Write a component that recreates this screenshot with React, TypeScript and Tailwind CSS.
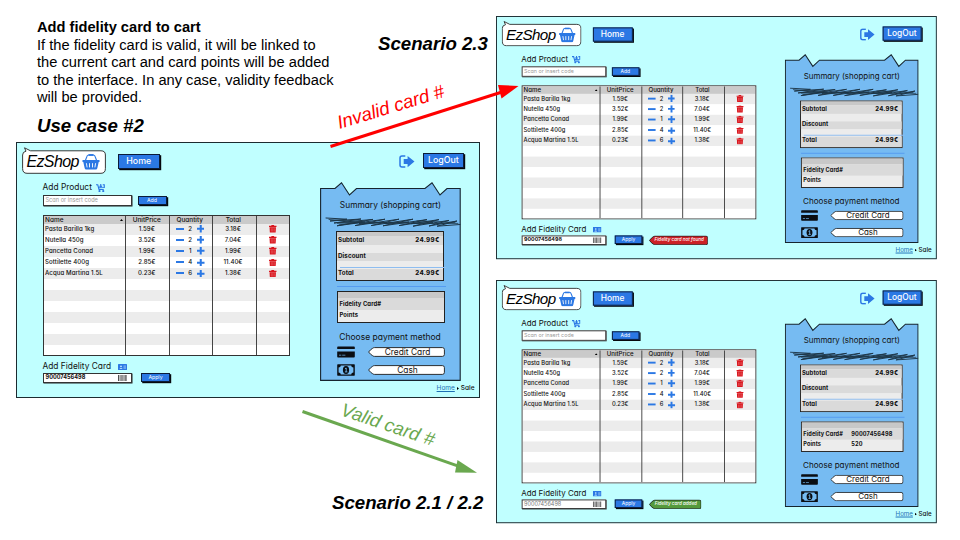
import React from "react";

type Status = "none" | "error" | "ok";

const items = [
  { name: "Pasta Barilla 1kg", price: "1.59€", qty: 2, total: "3.18€" },
  { name: "Nutella 450g", price: "3.52€", qty: 2, total: "7.04€" },
  { name: "Pancetta Conad", price: "1.99€", qty: 1, total: "1.99€" },
  { name: "Sottilette 400g", price: "2.85€", qty: 4, total: "11.40€" },
  { name: "Acqua Martina 1.5L", price: "0.23€", qty: 6, total: "1.38€" },
];

function Basket() {
  return (
    <svg className="h-[16px] w-[18px] shrink-0 text-[#2b78e4]" viewBox="0 0 18 16" fill="none" stroke="currentColor">
      <path d="M3.2 7 L5 2.2 Q5.4 1 6.8 1 H11.2 Q12.6 1 13 2.2 L14.8 7" strokeWidth="1.1" />
      <path d="M6.5 1 H11.5" strokeWidth="1.8" />
      <path d="M.5 6 H17.5 V8 H16.7 L15.3 14.2 Q15 15.5 13.8 15.5 H4.2 Q3 15.5 2.7 14.2 L1.3 8 H.5 Z" fill="currentColor" stroke="none" />
      <path d="M4.4 9.2 L5.1 13.4 M7.5 9.2 V13.4 M10.5 9.2 V13.4 M13.6 9.2 L12.9 13.4" stroke="#fff" strokeWidth=".9" />
    </svg>
  );
}

function Cart() {
  return (
    <svg className="h-[8px] w-[9px]" viewBox="0 0 18 16" fill="none" stroke="#2b78e4" strokeWidth="2.3">
      <path d="M0 1.5 H3.5 L6 11 H15.5" />
      <path d="M5 7.5 L16.5 7 V1.5 H13.5" />
      <path d="M9.5 0 V5.5 M7 3.6 L9.5 6 L12 3.6" />
      <circle cx="7" cy="14" r="1" fill="#2b78e4" />
      <circle cx="14.5" cy="14" r="1" fill="#2b78e4" />
    </svg>
  );
}

function Exit() {
  return (
    <svg className="h-[13px] w-[16px]" viewBox="0 0 16 13">
      <path d="M6.3 1 H3 Q1 1 1 3 V10 Q1 12 3 12 H6.3" fill="none" stroke="#2b78e4" strokeWidth="1.5" />
      <path d="M4.7 4.1 H8.6 V1 L15.5 6.6 L8.6 12.2 V9.1 H4.7 Z" fill="#2b78e4" />
    </svg>
  );
}

function Trash() {
  return (
    <svg className="h-[7.5px] w-[7.5px]" viewBox="0 0 14 14">
      <path d="M0 1.6 H4 L4.8 .2 H9.2 L10 1.6 H14 V3.8 H0 Z M1 4.2 H13 L12.4 14 H1.6 Z" fill="#d9151d" />
      <path d="M4.3 6 V12.3 M7 6 V12.3 M9.7 6 V12.3" stroke="#f08f93" strokeWidth=".8" />
    </svg>
  );
}

function IdCard() {
  return (
    <svg className="h-[6px] w-[9px]" viewBox="0 0 18 12">
      <rect width="18" height="12" rx="1" fill="#2b78e4" />
      <circle cx="6" cy="4.5" r="1.7" fill="#d5f5ff" />
      <path d="M2.8 9.6 Q6 5.2 9.2 9.6 Z" fill="#d5f5ff" />
      <path d="M11 4 H16 M11 6.3 H16 M11 8.6 H16" stroke="#d5f5ff" strokeWidth=".9" />
    </svg>
  );
}

function Barcode() {
  return (
    <svg className="h-[6.5px] w-[9px]" viewBox="0 0 18 13" stroke="#222">
      <path d="M1 0 V13 M8 0 V13 M15.5 0 V13" strokeWidth="1.6" />
      <path d="M3.7 0 V13 M5.6 0 V13 M10.5 0 V13 M12.8 0 V13 M17.5 0 V13" strokeWidth=".9" />
    </svg>
  );
}

function CreditIcon() {
  return (
    <svg className="h-[12px] w-[18px]" viewBox="0 0 18 12">
      <path d="M1 .5 H17 Q17.8 .5 17.8 1.2 V3 H.2 V1.2 Q.2 .5 1 .5 Z M.2 5.6 H17.8 V10.6 Q17.8 11.5 17 11.5 H1 Q.2 11.5 .2 10.6 Z" fill="#0a0d12" />
      <path d="M2 9.2 H4.3 M5.2 9.2 H8.4" stroke="#76bbf2" strokeWidth=".7" />
    </svg>
  );
}

function CashIcon() {
  return (
    <svg className="h-[12px] w-[18px]" viewBox="0 0 18 12">
      <rect x=".2" y=".3" width="17.6" height="11.4" rx=".6" fill="#0a0d12" />
      <path d="M3.8 1.6 H14.2 Q14.3 3.4 16.4 3.6 V8.4 Q14.3 8.6 14.2 10.4 H3.8 Q3.7 8.6 1.6 8.4 V3.6 Q3.7 3.4 3.8 1.6 Z" fill="#76bbf2" />
      <ellipse cx="9" cy="6" rx="3.1" ry="3.9" fill="#0a0d12" />
      <path d="M8 4.7 L9.2 4 V7.8 M7.9 7.9 H10.4" fill="none" stroke="#76bbf2" strokeWidth=".9" />
    </svg>
  );
}

function Scribble() {
  return (
    <svg className="h-[10px] w-[136px]" viewBox="0 0 136 10" fill="none" stroke="#1d3648" strokeLinecap="round">
      <path
        strokeWidth="1"
        d="M1 1 L22 2.2 L5 4 L36 2 L9 6 L48 2.4 L12 8.8 L60 2.2 L30 8.6 L74 2.2 L46 8.6 L88 2.2 L58 8.8 L102 2.6 L74 8.6 L114 2.6 L88 9.2 L124 3.4 L104 9 L132 4 L112 9.2 L135 7.5"
      />
      <path strokeWidth=".8" d="M4 2.5 L40 5 L12 6 L62 5.5 L34 6.5 L84 5 L60 6.5 L108 5.6 L86 6.6 L133 6.4 M14 7.8 L34 5.5 M92 4 L130 5.5" />
    </svg>
  );
}

function Button({ children, className }: { children: React.ReactNode; className: string }) {
  return (
    <div
      className={
        "flex items-center justify-center border border-[#0b1c38] bg-[#2b78e4] leading-none text-white shadow-[1.2px_1.2px_0_#05080d] " +
        className
      }
    >
      {children}
    </div>
  );
}

function Field({ children, className }: { children: React.ReactNode; className: string }) {
  return (
    <div className={"flex h-[10.5px] w-[89px] items-center justify-between border border-[#333] bg-white pr-[4px] pl-[2px] leading-none shadow-[0.5px_0.5px_0_#222] " + className}>
      {children}
    </div>
  );
}

function Tag({ width, height, fill, children }: { width: number; height: number; fill: string; children: React.ReactNode }) {
  const w = width - 0.6;
  const h = height - 0.6;
  return (
    <div className="relative flex items-center justify-center" style={{ width, height }}>
      <svg className="absolute inset-0 h-full w-full" viewBox={`0 0 ${width} ${height}`}>
        <path
          d={`M.6 ${height / 2} Q2.6 2.4 4.5 1.4 Q5.4 .6 6.5 .6 H${w - 2} Q${w} .6 ${w} 2.6 V${h - 2} Q${w} ${h} ${w - 2} ${h} H6.5 Q5.4 ${h} 4.5 ${h - 0.8} Q2.6 ${h - 1.8} .6 ${height / 2} Z`}
          fill={fill}
          stroke="#1a1a1a"
          strokeWidth=".9"
        />
      </svg>
      <span className="relative pl-[2px] leading-none whitespace-nowrap">{children}</span>
    </div>
  );
}

function Table() {
  const cols = "grid grid-cols-[82.5px_43.5px_43.5px_43.5px_34px]";
  return (
    <div className="relative h-[140.5px] w-[247.5px] overflow-hidden border border-[#333] bg-white text-[6.1px] leading-none font-medium">
      <div className={cols + " h-[7.6px] items-center bg-[#cacaca] text-center text-[6.4px]"}>
        <span className="flex items-center justify-between pr-[3px] pl-[1.5px] tracking-[0.1px]">
          Name
          <svg className="h-[2px] w-[3px]" viewBox="0 0 3 2"><path d="M0 2 L1.5 0 L3 2 Z" /></svg>
        </span>
        <span className="pr-[2px]">UnitPrice</span>
        <span className="pr-[3px]">Quantity</span>
        <span className="pr-[3px]">Total</span>
      </div>
      {Array.from({ length: 12 }, (_, i) => {
        const it = items[i];
        return (
          <div key={i} className={cols + " h-[11.05px] items-center text-center odd:bg-white even:bg-[#ececec]"}>
            {it && (
              <>
                <span className="pl-[1.5px] text-left tracking-[0.07px] whitespace-nowrap">{it.name}</span>
                <span className="pr-[2px]">{it.price}</span>
                <span className="flex items-center justify-between pr-[8.5px] pl-[6.5px]">
                  <i className="block h-[2px] w-[7.5px] bg-[#2b78e4]" />
                  {it.qty}
                  <svg className="h-[7.5px] w-[7.5px]" viewBox="0 0 7 7"><path d="M0 3.5 H7 M3.5 0 V7" stroke="#2b78e4" strokeWidth="1.9" /></svg>
                </span>
                <span className="pr-[3.5px]">{it.total}</span>
                <span className="flex justify-center pr-[1px]"><Trash /></span>
              </>
            )}
          </div>
        );
      })}
      <div className={cols + " absolute inset-0"}>
        {[0, 1, 2, 3].map((n) => (
          <div key={n} className="border-r border-[#444]" />
        ))}
      </div>
    </div>
  );
}

function Summary({ linked }: { linked: boolean }) {
  return (
    <div className="relative h-[199px] w-[141px]">
      <svg className="absolute inset-0 h-full w-full" viewBox="0 0 141 199">
        <path
          d="M.6 6.5 H15 L21.5 .8 L29.5 13 L36.5 6.5 H105 L112 .8 L120 13 L127 6.5 H140.2 V198.4 H.6 Z"
          fill="#76bbf2"
          stroke="#16242e"
          strokeWidth="1.1"
        />
      </svg>
      <div className="relative flex flex-col pt-[19px] leading-none">
        <div className="h-[10px] text-center text-[8.35px] whitespace-nowrap">Summary (shopping cart)</div>
        <div className="mt-[6px] pl-[5px]"><Scribble /></div>
        <div className="mt-[3.5px] ml-[15.5px] flex h-[50px] w-[108px] flex-col border border-[#222] bg-[#ececec] text-[6.2px] font-bold">
          <div className="h-[4.5px] bg-[#c8c8c8]" />
          <div className="flex h-[8.6px] items-center justify-between bg-[#dadada] pr-[3px] pl-[1.5px]">
            <span className="tracking-[0.1px]">Subtotal</span>
            <span className="font-extrabold tracking-[0.3px]">24.99€</span>
          </div>
          <div className="mt-[8.2px] flex h-[8px] items-center bg-[#dadada] pb-[1px] pl-[1.5px] tracking-[0.1px]">Discount</div>
          <div className="mt-[6px] -mr-[3px] ml-[3px] h-px bg-[#8ebdf0]" />
          <div className="mt-[1px] flex flex-1 items-center justify-between bg-[#dadada] pr-[3px] pb-[2px] pl-[1.5px]">
            <span className="tracking-[0.1px]">Total</span>
            <span className="font-extrabold tracking-[0.3px]">24.99€</span>
          </div>
        </div>
        <div className="mt-[5px] ml-[17px] h-px w-[109px] bg-[#559cf0]" />
        <div className="mt-[4.5px] ml-[16.5px] flex h-[32px] w-[108px] flex-col border border-[#222] bg-[#ececec] text-[5.9px] font-bold">
          <div className="h-[5.5px] bg-[#c8c8c8]" />
          <div className="flex h-[12px] items-center bg-[#dadada] pl-[2px]">
            <span className="w-[50.5px] tracking-[0.08px]">Fidelity Card#</span>
            {linked && <span className="tracking-[0.12px]">90007456498</span>}
          </div>
          <div className="flex flex-1 items-center pb-[1px] pl-[2px]">
            <span className="w-[50.5px] tracking-[0.08px]">Points</span>
            {linked && <span className="tracking-[0.12px]">520</span>}
          </div>
        </div>
        <div className="mt-[10px] h-[10px] pr-[1px] text-center text-[8.5px] whitespace-nowrap">Choose payment method</div>
        <div className="mt-[3.2px] flex h-[12px] items-center gap-[13.5px] pl-[16.5px] text-[8.4px]">
          <CreditIcon />
          <Tag width={77} height={10} fill="#fff">Credit Card</Tag>
        </div>
        <div className="mt-[6px] flex h-[12px] items-center gap-[13.5px] pl-[16.5px] text-[8.4px]">
          <CashIcon />
          <Tag width={77} height={10} fill="#fff">Cash</Tag>
        </div>
      </div>
    </div>
  );
}

function ShopWindow({ status }: { status: Status }) {
  return (
    <div className="h-[256px] w-[464px] border border-[#1c2b30] bg-[#c0ffff] font-['Inter',sans-serif] text-[#111] [font-feature-settings:'cv11']">
      <div className="flex h-[33px] pt-[8px] pl-[5px]">
        <div className="relative -mt-[1px] h-[24px] w-[84px]">
          <svg className="absolute -top-[3px] left-0 h-[27px] w-[84px]" viewBox="0 0 84 27">
            <path
              d="M2.5 .8 L8.5 3.8 H79 Q83.4 3.8 83.4 8 V21.5 Q83.4 26.3 79 26.3 H5 Q.6 26.3 .6 21.5 V8 Q.6 4.8 4 4.2 Z"
              fill="#fff"
              stroke="#222"
              strokeWidth=".9"
            />
          </svg>
          <div className="relative flex h-[24px] items-center pl-[4.5px] font-['Liberation_Sans',sans-serif] text-[16px] leading-none tracking-[-0.65px] text-black italic">
            <span className="w-[55px]">EzShop</span>
            <Basket />
          </div>
        </div>
        <Button className="mt-[3px] ml-[12px] h-[15px] w-[41.5px] text-[8.8px] font-medium">Home</Button>
        <div className="mt-[3.5px] ml-[239.3px]"><Exit /></div>
        <Button className="mt-[2px] ml-[8px] h-[15px] w-[41px] text-[8.8px] font-medium">LogOut</Button>
      </div>
      <div className="flex">
        <div className="w-[303px] pt-[6px] pl-[25.5px]">
          <div className="flex h-[11px] items-center gap-[4.5px] text-[8.4px] leading-none">
            Add Product <Cart />
          </div>
          <div className="mt-[2px] flex gap-[6px]">
            <Field className="text-[5.6px] text-[#999]">
              <span className="pt-[1px] tracking-[0.03px]">Scan or insert code</span>
            </Field>
            <Button className="mt-[1px] h-[8.8px] w-[29px] text-[5.2px]">Add</Button>
          </div>
          <div className="mt-[9.5px]"><Table /></div>
          <div className="mt-[5.5px] flex h-[11px] items-center gap-[7px] text-[8.35px] leading-none">
            Add Fidelity Card <IdCard />
          </div>
          <div className="mt-[0.5px] flex">
            <Field className={status === "ok" ? "text-[5.8px] text-[#777]" : "text-[5.6px] font-bold text-[#111]"}>
              90007456498 <Barcode />
            </Field>
            <Button className="mt-[0.5px] ml-[9.5px] h-[9px] w-[29px] text-[5.2px]">Apply</Button>
            {status !== "none" && (
              <div className="ml-[6.5px] text-[4.8px] font-medium text-white italic">
                {status === "error" ? (
                  <Tag width={62.5} height={10.5} fill="#cc2026">Fidelity card not found</Tag>
                ) : (
                  <Tag width={55.5} height={10.5} fill="#559a3c">Fidelity card added</Tag>
                )}
              </div>
            )}
          </div>
        </div>
        <div className="pt-[6px]">
          <Summary linked={status === "ok"} />
          <div className="mt-[4px] flex w-[156px] items-center justify-end gap-[2px] pr-[1.5px] text-[6.5px] leading-none">
            <span className="text-[#1c6fb5] underline">Home</span>
            <svg className="h-[3px] w-[2px]" viewBox="0 0 2 3"><path d="M0 0 L2 1.5 L0 3 Z" /></svg>
            <span className="font-medium">Sale</span>
          </div>
        </div>
      </div>
    </div>
  );
}

export default function App() {
  return (
    <div className="relative h-[540px] w-[960px] overflow-hidden bg-white font-['Liberation_Sans',sans-serif] text-black">
      <section className="absolute top-[19px] left-[37px] w-[310px] text-[14.67px] leading-[17.6px]">
        <h1 className="font-bold">Add fidelity card to cart</h1>
        <p>
          If the fidelity card is valid, it will be linked to<br />
          the current cart and card points will be added<br />
          to the interface. In any case, validity feedback<br />
          will be provided.
        </p>
        <h2 className="mt-[8px] text-[18.67px] leading-[22px] font-bold italic">Use case #2</h2>
      </section>

      <div className="absolute top-[142px] left-[16px]"><ShopWindow status="none" /></div>
      <div className="absolute top-[16px] left-[496px] origin-top-left scale-95"><ShopWindow status="error" /></div>
      <div className="absolute top-[280px] left-[496px] origin-top-left scale-95"><ShopWindow status="ok" /></div>

      <h2 className="absolute top-[33px] left-[378px] text-[18.67px] leading-[22px] font-bold whitespace-nowrap italic">Scenario 2.3</h2>
      <h2 className="absolute top-[492px] left-[332px] text-[18.67px] leading-[22px] font-bold whitespace-nowrap italic">Scenario 2.1 / 2.2</h2>

      <svg className="absolute inset-0 h-full w-full" viewBox="0 0 960 540">
        <path d="M330.5 146.5 L502 92" stroke="#ff0000" strokeWidth="3" />
        <path d="M498 85 L518.5 86 L501.5 98.5 Z" fill="#ff0000" />
        <path d="M302.5 411.5 L459 466.3" stroke="#6aa84f" strokeWidth="3" />
        <path d="M457.5 460 L477 472.7 L455 472.5 Z" fill="#6aa84f" />
      </svg>
      <div className="absolute top-[110px] left-[340px] origin-[0_21px] -rotate-[17deg] text-[18.67px] leading-[26px] whitespace-nowrap text-[#ff0000] italic">Invalid card #</div>
      <div className="absolute top-[396px] left-[339px] origin-[0_21px] rotate-[18.5deg] text-[18.67px] leading-[26px] whitespace-nowrap text-[#6aa84f] italic">Valid card #</div>
    </div>
  );
}
